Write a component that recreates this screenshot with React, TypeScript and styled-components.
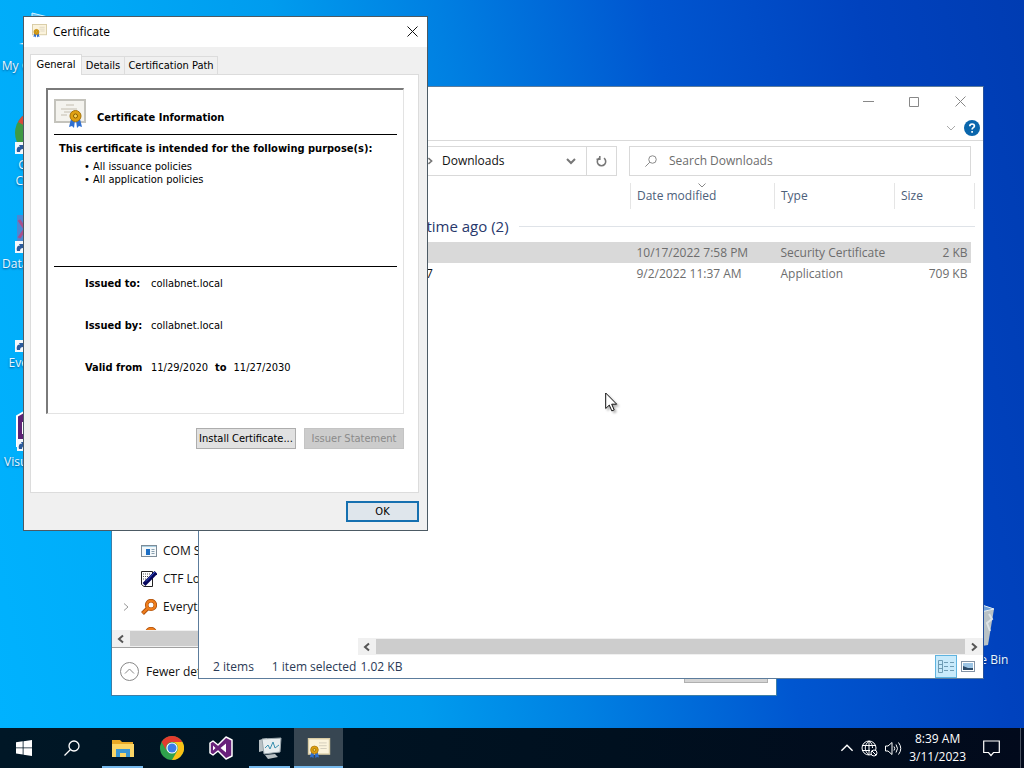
import React from "react";
import styled, { createGlobalStyle } from "styled-components";

const GlobalStyle = createGlobalStyle`
  * { box-sizing: border-box; }
  html, body, #root { height: 100%; }
  body {
    margin: 0;
    overflow: hidden;
    font-family: "Open Sans", "Noto Sans", sans-serif;
    font-size: 12px;
    line-height: 16px;
    color: #111;
  }
  button, input { font: inherit; color: inherit; margin: 0; }
  button { padding: 0; border: 0; background: none; }
  svg { display: block; flex: none; }
`;

const Screen = styled.div`
  height: 100%;
  display: flex;
  flex-direction: column;
`;

const Desktop = styled.main`
  position: relative;
  flex: 1;
  overflow: hidden;
  background: linear-gradient(78deg, #00b2fe 0%, #00aaf7 20%, #009cee 36%, #0080e2 50%, #0056d0 68%, #0042be 86%, #003cb2 100%);
`;

/* ---------- Desktop shortcuts ---------- */

const Shortcut = styled.a<{ $x: number; $y: number }>`
  position: absolute;
  left: ${(p) => p.$x}px;
  top: ${(p) => p.$y}px;
  width: 76px;
  display: flex;
  flex-direction: column;
  align-items: center;
  gap: 2px;
  color: #e8f6ff;
  text-align: center;
  text-decoration: none;
  text-shadow: 0 1px 2px rgba(0, 30, 80, 0.6);
`;

const ShortcutName = styled.span`
  white-space: pre;
`;

const Bin = styled(Shortcut)`
  left: auto;
  right: 9px;
`;

/* ---------- Windows ---------- */

const TaskManager = styled.section`
  position: absolute;
  left: 111px;
  right: 247px;
  bottom: 32px;
  top: 400px;
  display: flex;
  flex-direction: column;
  background: #fff;
  border: 1px solid #3d7fa8;
`;

const ProcessList = styled.ul`
  flex: 1;
  margin: 0;
  padding: 136px 0 0 9px;
  list-style: none;
  overflow: hidden;
  display: flex;
  flex-direction: column;
`;

const Process = styled.li`
  display: flex;
  flex: none;
  align-items: center;
  height: 28px;
  gap: 6px;
`;

const Twisty = styled.span`
  width: 14px;
  display: flex;
  justify-content: flex-start;
`;

const ScrollTrack = styled.div<{ $indent?: number }>`
  display: flex;
  flex: none;
  height: 17px;
  margin-left: ${(p) => p.$indent ?? 0}px;
  background: #f0f0f0;
`;

const ScrollArrow = styled.button`
  width: 18px;
  display: flex;
  align-items: center;
  justify-content: center;
`;

const ScrollThumb = styled.div`
  flex: 1;
  margin: 1px 0;
  background: #cdcdcd;
`;

const ManagerFooter = styled.footer`
  display: flex;
  flex: none;
  align-items: center;
  justify-content: space-between;
  height: 48px;
  padding: 0 8px;
  border-top: 1px solid #a0a0a0;
`;

const DetailsToggle = styled.button`
  display: flex;
  align-items: center;
  gap: 7px;
`;

const EndTask = styled.button`
  width: 84px;
  height: 22px;
  background: #d4d4d4;
  border: 1px solid #b0b0b0;
`;

const Explorer = styled.section`
  position: absolute;
  left: 198px;
  right: 40px;
  top: 86px;
  bottom: 49px;
  display: flex;
  flex-direction: column;
  background: #fff;
  border: 1px solid #5c7c9c;
  border-right-color: #24509c;
`;

const ExplorerTitle = styled.header`
  display: flex;
  flex: none;
  justify-content: flex-end;
  height: 29px;
`;

const WindowControl = styled.button`
  width: 46px;
  display: flex;
  align-items: center;
  justify-content: center;
`;

const Ribbon = styled.div`
  display: flex;
  flex: none;
  align-items: center;
  justify-content: flex-end;
  gap: 8px;
  height: 25px;
  padding-right: 3px;
  border-bottom: 1px solid #d9d9d9;
`;

const AddressRow = styled.div`
  display: flex;
  flex: none;
  gap: 12px;
  padding: 5px 12px 7px 130px;
`;

const AddressBar = styled.div`
  display: flex;
  align-items: center;
  flex: 1;
  height: 30px;
  border: 1px solid #d9d9d9;
`;

const Crumb = styled.span`
  flex: 1;
  display: flex;
  align-items: center;
  gap: 8px;
  padding-left: 96px;
`;

const AddressButton = styled.button<{ $divided?: boolean }>`
  width: 30px;
  height: 28px;
  display: flex;
  align-items: center;
  justify-content: center;
  border-left: ${(p) => (p.$divided ? "1px solid #d9d9d9" : "0")};
`;

const SearchBox = styled.label`
  display: flex;
  align-items: center;
  gap: 12px;
  width: 342px;
  height: 30px;
  padding: 0 15px;
  border: 1px solid #d9d9d9;
`;

const SearchInput = styled.input`
  flex: 1;
  min-width: 0;
  padding: 0;
  border: 0;
  outline: 0;
  background: none;
  &::placeholder { color: #6d6d6d; opacity: 1; }
`;

const FilePane = styled.div`
  flex: 1;
  padding: 0 8px 0 159px;
`;

const FileTable = styled.table`
  width: 100%;
  table-layout: fixed;
  border-collapse: collapse;
`;

const NameCol = styled.col``;
const Col = styled.col<{ $w: number }>`
  width: ${(p) => p.$w}px;
`;

const Th = styled.th`
  position: relative;
  height: 26px;
  padding: 0 6px;
  font-weight: 400;
  text-align: left;
  color: #4c607a;
  border-right: 1px solid #e5e5e5;
`;

const SortMark = styled.svg`
  position: absolute;
  left: 50%;
  top: 0;
  margin-left: -4px;
`;

const GroupCell = styled.td`
  height: 33px;
  padding: 1px 0 0 21px;
`;

const Group = styled.div`
  display: flex;
  align-items: center;
  gap: 10px;
  font-size: 15px;
  line-height: 20px;
  color: #28386c;
  &::after {
    content: "";
    flex: 1;
    height: 1px;
    background: #dfe3e8;
  }
`;

const FileRow = styled.tr<{ $selected?: boolean }>`
  height: 21px;
  color: #6d6d6d;
  td { background: ${(p) => (p.$selected ? "#d9d9d9" : "transparent")}; }
  td:last-child { background: none; }
`;

const Td = styled.td<{ $right?: boolean }>`
  padding: 0 4px 0 6px;
  text-align: ${(p) => (p.$right ? "right" : "left")};
`;

const FileName = styled(Td)`
  padding-left: 68px;
  color: #111;
`;

const StatusBar = styled.footer`
  display: flex;
  flex: none;
  align-items: center;
  gap: 18px;
  height: 23px;
  padding: 0 4px 0 14px;
  color: #2a3a56;
`;

const StatusDetail = styled.span`
  display: flex;
  flex: 1;
  gap: 4px;
`;

const ViewButtons = styled.div`
  display: flex;
  align-self: stretch;
`;

const ViewButton = styled.button<{ $active?: boolean }>`
  width: 22px;
  display: flex;
  align-items: center;
  justify-content: center;
  border: 1px solid ${(p) => (p.$active ? "#5fb4e0" : "transparent")};
  background: ${(p) => (p.$active ? "#c8eafb" : "none")};
`;

/* ---------- Certificate dialog ---------- */

const Dialog = styled.section`
  position: absolute;
  left: 23px;
  top: 16px;
  width: 405px;
  display: flex;
  flex-direction: column;
  background: #f0f0f0;
  border: 1px solid #4c5a64;
  font-family: "DejaVu Sans Condensed", "Noto Sans", sans-serif;
  font-size: 11px;
  line-height: 13px;
  color: #000;
`;

const DialogTitle = styled.header`
  display: flex;
  align-items: center;
  gap: 6px;
  height: 30px;
  padding: 0 0 2px 8px;
  background: #fff;
  font-family: "Open Sans", "Noto Sans", sans-serif;
`;

const DialogName = styled.h1`
  flex: 1;
  margin: 0;
  font-size: 12px;
  font-weight: 400;
`;

const CloseButton = styled.button`
  width: 30px;
  height: 28px;
  display: flex;
  align-items: center;
  justify-content: center;
`;

const DialogBody = styled.div`
  display: flex;
  flex-direction: column;
  padding: 7px 8px 8px 6px;
`;

const TabList = styled.div`
  display: flex;
  align-items: flex-end;
  height: 20px;
`;

const Tab = styled.button<{ $active?: boolean; $w: number }>`
  width: ${(p) => p.$w}px;
  height: ${(p) => (p.$active ? 21 : 18)}px;
  margin-bottom: ${(p) => (p.$active ? -1 : 0)}px;
  padding-bottom: ${(p) => (p.$active ? 2 : 0)}px;
  position: relative;
  z-index: ${(p) => (p.$active ? 1 : 0)};
  white-space: nowrap;
  background: ${(p) => (p.$active ? "#fff" : "#f0f0f0")};
  border: 1px solid #dcdcdc;
  border-left-width: ${(p) => (p.$active ? 1 : 0)}px;
  border-bottom: 0;
`;

const TabPanel = styled.div`
  height: 419px;
  padding: 13px 14px 0 15px;
  background: #fff;
  border: 1px solid #dcdcdc;
`;

const InfoBox = styled.div`
  height: 326px;
  padding: 8px 6px;
  border: 1px solid #e3e3e3;
  border-top: 2px solid #7a7a7a;
  border-left: 2px solid #7a7a7a;
`;

const InfoHead = styled.div`
  display: flex;
  align-items: center;
  gap: 11px;
  height: 37px;
  padding-bottom: 4px;
  border-bottom: 1px solid #000;
`;

const InfoTitle = styled.h2`
  margin: 6px 0 0;
  font-size: 11px;
  line-height: 13px;
`;

const Purposes = styled.div`
  height: 132px;
  padding: 7px 5px;
  border-bottom: 1px solid #000;
`;

const PurposeTitle = styled.h3`
  margin: 0 0 5px;
  font-size: 11px;
  line-height: 13px;
  white-space: nowrap;
`;

const PurposeList = styled.ul`
  margin: 0;
  padding: 0 0 0 25px;
  list-style: none;
  li::before { content: "• "; }
`;

const Facts = styled.dl`
  display: flex;
  flex-direction: column;
  gap: 29px;
  margin: 0;
  padding: 10px 0 0 31px;
`;

const Fact = styled.div`
  display: flex;
  gap: 7px;
  dt { font-weight: 700; }
  dt:first-child { min-width: 59px; }
  dd { margin: 0; }
`;

const ButtonRow = styled.div<{ $top: number }>`
  display: flex;
  justify-content: flex-end;
  gap: 8px;
  padding-top: ${(p) => p.$top}px;
`;

const PushButton = styled.button<{ $primary?: boolean }>`
  width: ${(p) => (p.$primary ? 73 : 100)}px;
  height: 21px;
  white-space: nowrap;
  background: ${(p) => (p.$primary ? "#dfe6ec" : "#e1e1e1")};
  border: ${(p) => (p.$primary ? "2px solid #1670b0" : "1px solid #adadad")};
  &:disabled {
    background: #ccc;
    border-color: #c4c4c4;
    color: #8a8a8a;
  }
`;

/* ---------- Taskbar ---------- */

const Taskbar = styled.nav`
  display: flex;
  flex: none;
  height: 40px;
  background: linear-gradient(90deg, #001726, #00101f 60%, #020a1c);
  color: #fff;
`;

const AppButtons = styled.div`
  display: flex;
  margin-left: 2px;
`;

const TaskButton = styled.button<{ $open?: boolean; $active?: boolean; $system?: boolean }>`
  width: ${(p) => (p.$system ? 48 : 49)}px;
  height: 40px;
  display: flex;
  align-items: center;
  justify-content: center;
  position: relative;
  background: ${(p) => (p.$active ? "#374652" : "none")};
  &::after {
    content: "";
    display: ${(p) => (p.$open || p.$active ? "block" : "none")};
    position: absolute;
    left: ${(p) => (p.$active ? 0 : 4)}px;
    right: ${(p) => (p.$active ? 0 : 4)}px;
    bottom: 0;
    height: 2px;
    background: #76b9ed;
  }
`;

const Tray = styled.div`
  display: flex;
  align-items: center;
  gap: 7px;
  margin-left: auto;
`;

const TrayButton = styled.button`
  display: flex;
`;

const Clock = styled.time`
  display: flex;
  flex-direction: column;
  align-items: center;
  line-height: 18px;
  padding-right: 10px;
`;

const ShowDesktop = styled.button`
  width: 4px;
  height: 40px;
  margin-left: 13px;
  border-left: 1px solid #4a5260;
`;

const Pointer = styled.svg`
  position: absolute;
  left: 605px;
  top: 392px;
  filter: drop-shadow(2px 2px 1px rgba(0, 0, 0, 0.3));
`;

/* ---------- Drawings ---------- */

type Dir = "left" | "right" | "up" | "down";
const chevronPath: Record<Dir, string> = {
  left: "M7 1.5L3 5l4 3.5",
  right: "M3 1.5L7 5L3 8.5",
  up: "M1 7L5 3l4 4",
  down: "M1 3L5 7l4-4",
};
const Chevron = ({ dir, size = 10, color = "#555", weight = 2 }: { dir: Dir; size?: number; color?: string; weight?: number }) => (
  <svg width={size} height={size} viewBox="0 0 10 10" fill="none" stroke={color} strokeWidth={weight}>
    <path d={chevronPath[dir]} />
  </svg>
);

const Seal = ({ x }: { x: number }) => (
  <g transform={`translate(${x} 0)`}>
    <path d="M17 20l-2 8 3-1 2 2 1-8zM26 20l2 8-3-1-2 2-1-8z" fill="#2f6fd0" />
    <circle cx="21.5" cy="17" r="5.5" fill="#dfa012" stroke="#a87408" />
    <circle cx="21.5" cy="17" r="2" fill="#f7da5c" stroke="#8a5a00" />
  </g>
);

const CertIcon = ({ w, h, small }: { w: number; h: number; small?: boolean }) => (
  <svg width={w} height={h} viewBox="0 0 32 30">
    <rect x="1" y="1" width="30" height="22" fill={small ? "#fbf3dc" : "#f4f3ee"} stroke={small ? "#d8cba4" : "#c4c3bc"} strokeWidth="2" />
    <path d={small ? "M16 7h11M16 11h11M18 15h9" : "M12 6h8M7 10h16M10 13h12M7 16h6"} stroke="#c4beb0" />
    <Seal x={small ? -12 : 0} />
  </svg>
);

const VsIcon = () => (
  <svg width="24" height="24" viewBox="0 0 24 24">
    <path d="M1 7l3-2 5 4 8-8 6 3v16l-6 3-8-8-5 4-3-2z" fill="#68217a" stroke="#fff" strokeWidth="1.5" strokeLinejoin="round" />
    <path d="M4 9.5v5L6.5 12zM17 7.5L11.5 12l5.5 4.5z" fill="#fff" />
  </svg>
);

const ChromeIcon = ({ size }: { size: number }) => (
  <svg width={size} height={size} viewBox="0 0 24 24">
    <circle cx="12" cy="12" r="12" fill="#2fa24c" />
    <path d="M1.6 6A12 12 0 0 1 22.4 6H12a6 6 0 0 0-5.2 9z" fill="#e33b2e" />
    <path d="M22.4 6A12 12 0 0 1 12 24l5.2-9A6 6 0 0 0 12 6z" fill="#fbc116" />
    <circle cx="12" cy="12" r="5.6" fill="#fff" />
    <circle cx="12" cy="12" r="4.5" fill="#3a7de8" />
  </svg>
);

const Badge = () => (
  <g>
    <rect x="1" y="35" width="12" height="12" fill="#f4f8fc" />
    <path d="M3 45c-1-4 1-6 3-5l-1-2h6v6l-2-2c-2 0-3 1-3 3z" fill="#2a5a9c" />
  </g>
);

const SearchGlass = ({ size, color }: { size: number; color: string }) => (
  <svg width={size} height={size} viewBox="0 0 16 16" fill="none" stroke={color} strokeWidth="1.3">
    <circle cx="10" cy="6" r="5" />
    <path d="M6.5 9.5L.5 15.5" />
  </svg>
);

const KeyIcon = () => (
  <svg width="16" height="16" viewBox="0 0 16 16" fill="none">
    <path d="M7 9L1.5 14.5" stroke="#a84c08" strokeWidth="4" />
    <circle cx="10" cy="6" r="4.3" stroke="#a84c08" strokeWidth="3.6" />
    <path d="M7 9L1.8 14.2" stroke="#ee7d1c" strokeWidth="2.4" />
    <circle cx="10" cy="6" r="4.2" stroke="#ee7d1c" strokeWidth="2.4" />
  </svg>
);

const processes = [
  {
    name: "COM Surrogate",
    icon: (
      <svg width="16" height="12" viewBox="0 0 16 12">
        <rect x=".5" y=".5" width="15" height="11" fill="#f4f8fa" stroke="#7d8c98" />
        <path d="M1 1.5h14" stroke="#a9cfe2" />
        <rect x="5" y="4" width="4" height="6" fill="#1c6ec4" />
        <path d="M10.5 4.5h3M10.5 6.5h3M10.5 8.5h3" stroke="#8aa0b0" />
      </svg>
    ),
  },
  {
    name: "CTF Loader",
    icon: (
      <svg width="16" height="16" viewBox="0 0 16 16">
        <path d="M.5.5h11v15H3l-2.5-2z" fill="#fff" stroke="#222" />
        <path d="M2 3h7M2 5.5h6M2 8h4" stroke="#555" strokeDasharray="1 1" />
        <path d="M3 13.5L15 1.5" stroke="#06065c" strokeWidth="4" />
        <path d="M5 10.5L14 1" stroke="#2f4fc8" strokeWidth="1" />
      </svg>
    ),
  },
  { name: "Everything", icon: <KeyIcon />, expandable: true },
  { name: "", icon: <KeyIcon /> },
];

const files = [
  { name: "", date: "10/17/2022 7:58 PM", type: "Security Certificate", size: "2 KB", selected: true },
  { name: "7", date: "9/2/2022 11:37 AM", type: "Application", size: "709 KB" },
];

export default function App() {
  return (
    <Screen>
      <GlobalStyle />
      <Desktop>
        <Shortcut href="#computer" $x={2} $y={8}>
          <svg width="48" height="48" viewBox="0 0 48 48">
            <path d="M16 5l24 6v20H16z" fill="#5fc4f4" stroke="#d8f2ff" />
            <path d="M3 36l20-6v8z" fill="#dff0fa" />
          </svg>
          <ShortcutName>My Computer</ShortcutName>
        </Shortcut>
        <Shortcut href="#chrome" $x={0} $y={107}>
          <svg width="48" height="48" viewBox="0 0 48 48">
            <circle cx="24" cy="26" r="23" fill="#3f9a44" />
            <path d="M4 15A23 23 0 0 1 44 15L24 26z" fill="#d8493a" />
            <Badge />
          </svg>
          <ShortcutName>{"Google\nChrome"}</ShortcutName>
        </Shortcut>
        <Shortcut href="#data" $x={0} $y={206}>
          <svg width="48" height="48" viewBox="0 0 48 48">
            <rect x="3" y="9" width="40" height="38" fill="#4a88d4" />
            <path d="M5 14l12 18M17 14L5 32" stroke="#a8508c" strokeWidth="3" />
            <Badge />
          </svg>
          <ShortcutName>Data Exports</ShortcutName>
        </Shortcut>
        <Shortcut href="#everything" $x={0} $y={305}>
          <svg width="48" height="48" viewBox="0 0 48 48">
            <circle cx="32" cy="18" r="12" fill="none" stroke="#ee7d1c" strokeWidth="6" />
            <Badge />
          </svg>
          <ShortcutName>Everything</ShortcutName>
        </Shortcut>
        <Shortcut href="#visual-studio" $x={2} $y={404}>
          <svg width="48" height="48" viewBox="0 0 48 48">
            <path d="M1 12l7-4 30 4v30H1z" fill="#5c2175" stroke="#fff" strokeWidth="2" />
            <path d="M7 18v12" stroke="#fff" strokeWidth="2" />
            <Badge />
          </svg>
          <ShortcutName>Visual Studio</ShortcutName>
        </Shortcut>
        <Bin href="#bin" $x={0} $y={602}>
          <svg width="48" height="48" viewBox="0 0 48 48">
            <path d="M8 5l18-3 15 5-6 36-12 2-12-4z" fill="#b9c2c6" />
            <path d="M8 5l18-3 15 5-13 3z" fill="#6fa0d8" stroke="#e4ecf0" />
            <path d="M36 12l3 5-5 4 3 8" stroke="#dde3e6" fill="none" strokeWidth="2" />
          </svg>
          <ShortcutName>Recycle Bin</ShortcutName>
        </Bin>

        <TaskManager aria-label="Task Manager">
          <ProcessList>
            {processes.map((p, i) => (
              <Process key={i}>
                <Twisty>{p.expandable && <Chevron dir="right" color="#999" weight={1} />}</Twisty>
                {p.icon}
                {p.name}
              </Process>
            ))}
          </ProcessList>
          <ScrollTrack>
            <ScrollArrow aria-label="Scroll left"><Chevron dir="left" /></ScrollArrow>
            <ScrollThumb />
          </ScrollTrack>
          <ManagerFooter>
            <DetailsToggle>
              <svg width="19" height="19" viewBox="0 0 19 19" fill="none" stroke="#888">
                <circle cx="9.5" cy="9.5" r="9" />
                <path d="M5 11.5l4.5-4.5 4.5 4.5" />
              </svg>
              Fewer details
            </DetailsToggle>
            <EndTask aria-label="End task" />
          </ManagerFooter>
        </TaskManager>

        <Explorer aria-label="Downloads">
          <ExplorerTitle>
            <WindowControl aria-label="Minimize">
              <svg width="11" height="11" stroke="#888"><path d="M0 5.5h11" /></svg>
            </WindowControl>
            <WindowControl aria-label="Maximize">
              <svg width="10" height="10" fill="none" stroke="#888"><path d="M.5.5h9v9H.5z" /></svg>
            </WindowControl>
            <WindowControl aria-label="Close">
              <svg width="11" height="11" stroke="#888"><path d="M.5.5l10 10M10.5.5l-10 10" /></svg>
            </WindowControl>
          </ExplorerTitle>
          <Ribbon>
            <Chevron dir="down" color="#aaa" weight={1} />
            <svg width="16" height="16" viewBox="0 0 16 16" fill="none">
              <circle cx="8" cy="8" r="8" fill="#0a66ac" />
              <path d="M5.8 6.3c0-3 4.6-3 4.6-.3 0 1.7-2.300 1.700-2.300 3.500M8.100 11v1.700" stroke="#fff" strokeWidth="1.7" />
            </svg>
          </Ribbon>
          <AddressRow>
            <AddressBar>
              <Crumb><Chevron dir="right" size={8} color="#777" />Downloads</Crumb>
              <AddressButton aria-label="Recent locations"><Chevron dir="down" color="#777" /></AddressButton>
              <AddressButton $divided aria-label="Refresh">
                <svg width="11" height="11" viewBox="0 0 11 11" fill="none" stroke="#777" strokeWidth="1.6">
                  <path d="M3 2.2A4.2 4.2 0 1 0 8 2.2M3.8 0v3.2H.5" />
                </svg>
              </AddressButton>
            </AddressBar>
            <SearchBox>
              <SearchGlass size={12} color="#888" />
              <SearchInput type="search" placeholder="Search Downloads" aria-label="Search Downloads" />
            </SearchBox>
          </AddressRow>
          <FilePane>
            <FileTable>
              <colgroup>
                <NameCol />
                <Col $w={144} />
                <Col $w={120} />
                <Col $w={77} />
                <Col $w={3} />
              </colgroup>
              <thead>
                <tr>
                  <Th aria-label="Name" />
                  <Th>
                    <SortMark width="8" height="5" fill="none" stroke="#888"><path d="M.5.5L4 4 7.5.5" /></SortMark>
                    Date modified
                  </Th>
                  <Th>Type</Th>
                  <Th colSpan={2}>Size</Th>
                </tr>
              </thead>
              <tbody>
                <tr>
                  <GroupCell colSpan={5}><Group>A long time ago (2)</Group></GroupCell>
                </tr>
                {files.map((f) => (
                  <FileRow key={f.date} $selected={f.selected}>
                    <FileName>{f.name}</FileName>
                    <Td>{f.date}</Td>
                    <Td>{f.type}</Td>
                    <Td $right>{f.size}</Td>
                    <td />
                  </FileRow>
                ))}
              </tbody>
            </FileTable>
          </FilePane>
          <ScrollTrack $indent={159}>
            <ScrollArrow aria-label="Scroll left"><Chevron dir="left" /></ScrollArrow>
            <ScrollThumb />
            <ScrollArrow aria-label="Scroll right"><Chevron dir="right" /></ScrollArrow>
          </ScrollTrack>
          <StatusBar>
            <span>2 items</span>
            <StatusDetail><span>1 item selected</span><span>1.02 KB</span></StatusDetail>
            <ViewButtons>
              <ViewButton $active aria-label="Details view">
                <svg width="16" height="13" fill="none" stroke="#6f9cb4">
                  <path d="M.5.5h4v12h-4zM.5 4.5h4M.5 8.5h4M6 2.5h4M12 2.5h4M6 6.5h4M12 6.5h4M6 10.5h4M12 10.5h4" />
                </svg>
              </ViewButton>
              <ViewButton aria-label="Large icons view">
                <svg width="14" height="11">
                  <rect x=".5" y=".5" width="13" height="10" fill="#fff" stroke="#8494a6" />
                  <rect x="2" y="2" width="10" height="7" fill="#9cc4e4" />
                  <path d="M2 5l5 2h5v2H2z" fill="#2c4a68" />
                </svg>
              </ViewButton>
            </ViewButtons>
          </StatusBar>
        </Explorer>

        <Dialog role="dialog" aria-label="Certificate">
          <DialogTitle>
            <CertIcon w={15} h={14} small />
            <DialogName>Certificate</DialogName>
            <CloseButton aria-label="Close">
              <svg width="11" height="11" stroke="#111"><path d="M.5.5l10 10M10.5.5l-10 10" /></svg>
            </CloseButton>
          </DialogTitle>
          <DialogBody>
            <TabList role="tablist">
              <Tab role="tab" aria-selected="true" $active $w={52}>General</Tab>
              <Tab role="tab" aria-selected="false" $w={43}>Details</Tab>
              <Tab role="tab" aria-selected="false" $w={93}>Certification Path</Tab>
            </TabList>
            <TabPanel role="tabpanel">
              <InfoBox>
                <InfoHead>
                  <CertIcon w={32} h={30} />
                  <InfoTitle>Certificate Information</InfoTitle>
                </InfoHead>
                <Purposes>
                  <PurposeTitle>This certificate is intended for the following purpose(s):</PurposeTitle>
                  <PurposeList>
                    <li>All issuance policies</li>
                    <li>All application policies</li>
                  </PurposeList>
                </Purposes>
                <Facts>
                  <Fact><dt>Issued to:</dt><dd>collabnet.local</dd></Fact>
                  <Fact><dt>Issued by:</dt><dd>collabnet.local</dd></Fact>
                  <Fact><dt>Valid from</dt><dd>11/29/2020</dd><dt>to</dt><dd>11/27/2030</dd></Fact>
                </Facts>
              </InfoBox>
              <ButtonRow $top={14}>
                <PushButton>Install Certificate...</PushButton>
                <PushButton disabled>Issuer Statement</PushButton>
              </ButtonRow>
            </TabPanel>
            <ButtonRow $top={8}>
              <PushButton $primary>OK</PushButton>
            </ButtonRow>
          </DialogBody>
        </Dialog>

        <Pointer width="13" height="20" viewBox="0 0 13 20">
          <path d="M.7 1v15.5l3.6-3.4 2.5 5.8 2.4-1-2.5-5.7h5z" fill="#fff" stroke="#111" />
        </Pointer>
      </Desktop>

      <Taskbar>
        <TaskButton $system aria-label="Start">
          <svg width="16" height="16" viewBox="0 0 16 16" fill="#fff">
            <path d="M0 2.3l6.7-1v6.2H0zM7.5 1.2L16 0v7.5H7.5zM0 8.3h6.7v6.2l-6.7-1zM7.5 8.3H16V16l-8.5-1.2z" />
          </svg>
        </TaskButton>
        <TaskButton $system aria-label="Search"><SearchGlass size={16} color="#fff" /></TaskButton>
        <AppButtons>
          <TaskButton $open aria-label="File Explorer">
            <svg width="22" height="19" viewBox="0 0 22 19">
              <path d="M0 1h8l2 2h11v15H0z" fill="#e8a927" />
              <path d="M0 5h22v13H0z" fill="#fbd666" />
              <path d="M4 18v-8h14v8h-4v-4H8v4z" fill="#3a96d4" />
            </svg>
          </TaskButton>
          <TaskButton aria-label="Chrome"><ChromeIcon size={24} /></TaskButton>
          <TaskButton aria-label="Visual Studio"><VsIcon /></TaskButton>
          <TaskButton $open aria-label="Task Manager">
            <svg width="24" height="22" viewBox="0 0 24 22">
              <path d="M1 3l8-2v12l-8 2zM7 18l10-1 3 3-10 2z" fill="#b8c0c4" />
              <path d="M4 2l19-1-1 14-16 2z" fill="#e7edef" stroke="#9aa6ac" />
              <path d="M7 11l3-3 2 4 3-7 2 6 4-3" stroke="#3990b0" fill="none" />
            </svg>
          </TaskButton>
          <TaskButton $active aria-label="Certificate"><CertIcon w={24} h={21} small /></TaskButton>
        </AppButtons>
        <Tray>
          <TrayButton aria-label="Hidden icons"><Chevron dir="up" size={14} color="#fff" weight={1} /></TrayButton>
          <TrayButton aria-label="Network">
            <svg width="17" height="17" viewBox="0 0 17 17" fill="none" stroke="#fff">
              <circle cx="8" cy="8" r="7" />
              <path d="M1 5.5h14M1 10.5h8M8 1v14M8 1c-5 4-5 10 0 14M8 1c3 2 3.5 5 3.5 7" />
              <circle cx="13" cy="13" r="3" fill="#020a1c" />
              <path d="M11 11l4 4" />
            </svg>
          </TrayButton>
          <TrayButton aria-label="Volume">
            <svg width="17" height="15" viewBox="0 0 17 15" fill="none" stroke="#fff">
              <path d="M.5 5h2.5l4-3.5v12L3 10H.5zM9 5.5q1.5 2 0 4M11 3.5q3 4 0 8M13.5 1.5q4.5 6 0 12" />
            </svg>
          </TrayButton>
          <Clock><span>8:39 AM</span><span>3/11/2023</span></Clock>
          <TrayButton aria-label="Notifications">
            <svg width="17" height="17" viewBox="0 0 17 17" fill="none" stroke="#fff" strokeWidth="1.2">
              <path d="M.7 1h15.6v11.5H10.5L8 15.5l-2.5-3H.7z" />
            </svg>
          </TrayButton>
          <ShowDesktop aria-label="Show desktop" />
        </Tray>
      </Taskbar>
    </Screen>
  );
}
